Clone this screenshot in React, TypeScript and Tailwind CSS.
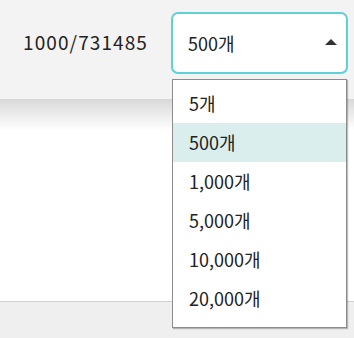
const options = ["5개", "500개", "1,000개", "5,000개", "10,000개", "20,000개"];

export default function App() {
  const selected = "500개";

  return (
    <div
      className="relative h-[338px] w-[354px] overflow-hidden bg-[#efefef] text-[#222]"
      style={{ fontFamily: '"Noto Sans CJK KR", "Noto Sans", sans-serif' }}
    >
      <div className="flex h-[100px] items-start justify-end border-b border-[#d6d6d6] bg-[#f3f3f3] pr-[6px] pt-[12px]">
        <span className="mr-[23px] mt-[16px] text-[19px] tracking-[1.1px] text-[#222]">1000/731485</span>
        <div className="relative h-[62px] w-[177px]">
          <div className="flex h-full items-center justify-between rounded-[7px] border-2 border-[#5fd0d4] bg-white pl-[15px] pr-[9px]">
            <span className="text-[18px] text-[#222]">{selected}</span>
            <svg width="12" height="6" viewBox="0 0 12 6" className="mb-[2px]">
              <path d="M0 6 L6 0 L12 6 Z" fill="#333" />
            </svg>
          </div>
          <ul className="absolute left-[1px] top-[67px] z-10 w-[175px] border border-[#8c8c8c] bg-white pb-[9px] pt-[4px] shadow-[1px_1px_1px_rgba(0,0,0,0.25)]">
            {options.map((o) => (
              <li
                key={o}
                className={`flex h-[39px] items-center pl-[16px] text-[18px] text-[#222] ${
                  o === selected ? "bg-[#dbeeee]" : ""
                }`}
              >
                {o}
              </li>
            ))}
          </ul>
        </div>
      </div>
      <div className="h-[202px] border-b border-[#d2d2d2] bg-gradient-to-b from-[#dadada] via-white via-[15%] to-white" />
    </div>
  );
}
